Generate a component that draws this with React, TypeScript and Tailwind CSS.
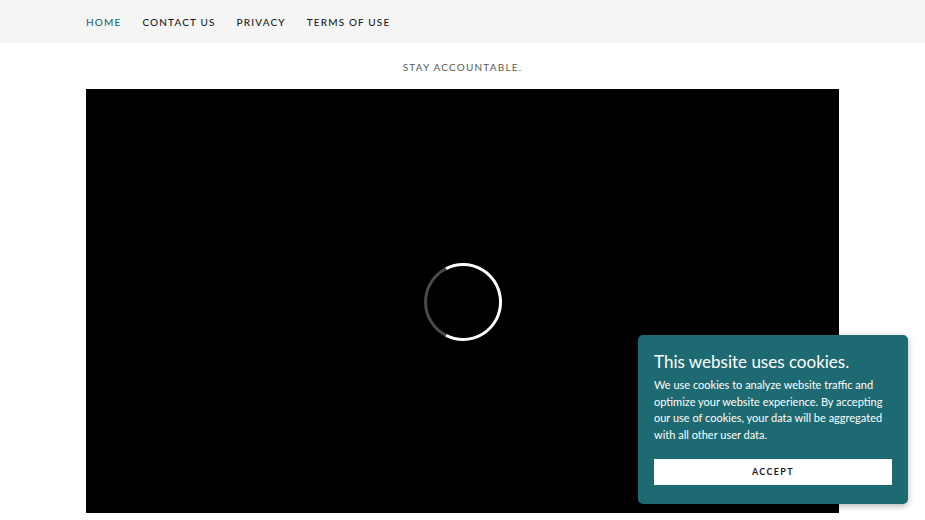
export default function App() {
  const links = ["HOME", "CONTACT US", "PRIVACY", "TERMS OF USE"];

  return (
    <div className="relative min-h-[520px] bg-white font-['Lato','Liberation_Sans',sans-serif]">
      {/* top nav */}
      <header className="flex h-[43px] items-center gap-[21px] bg-[#f5f5f5] px-[86px]">
        {links.map((l, i) => (
          <a
            key={l}
            className={
              "text-[10px] leading-none tracking-[0.115em] font-medium " +
              (i === 0 ? "text-[#1e6a72]" : "text-[#1b1b1b]")
            }
          >
            {l}
          </a>
        ))}
      </header>

      <main className="px-[86px]">
        <p className="mt-[18px] text-center text-[10px] leading-[12px] tracking-[0.12em] text-[#595959]">
          STAY ACCOUNTABLE.
        </p>

        {/* video placeholder */}
        <div className="mt-[16px] flex aspect-video w-full items-center justify-center bg-black">
          <svg width="80" height="80" viewBox="0 0 80 80" fill="none" className="mt-[2px]">
            <path d="M23 6.6 A37.5 37.5 0 0 0 23 73.4" stroke="#4a4a4a" strokeWidth="3" />
            <path d="M23 6.6 A37.5 37.5 0 1 1 23 73.4" stroke="#ffffff" strokeWidth="3" />
          </svg>
        </div>
      </main>

      {/* cookie banner */}
      <div className="absolute bottom-[16px] right-[17px] w-[270px] rounded-[5px] bg-[#1e6a72] px-4 pt-[16px] pb-[19px] shadow-[0_2px_6px_rgba(0,0,0,0.3)]">
        <h2 className="text-[17px] leading-[22px] text-white">This website uses cookies.</h2>
        <p className="mt-[4px] text-[11px] leading-[16.5px] text-white">
          We use cookies to analyze website traffic and optimize your website experience. By accepting
          our use of cookies, your data will be aggregated with all other user data.
        </p>
        <button className="mt-[16px] flex h-[26px] w-full items-center justify-center bg-white text-[9px] font-bold tracking-[0.15em] text-[#1b1b1b]">
          ACCEPT
        </button>
      </div>
    </div>
  );
}
